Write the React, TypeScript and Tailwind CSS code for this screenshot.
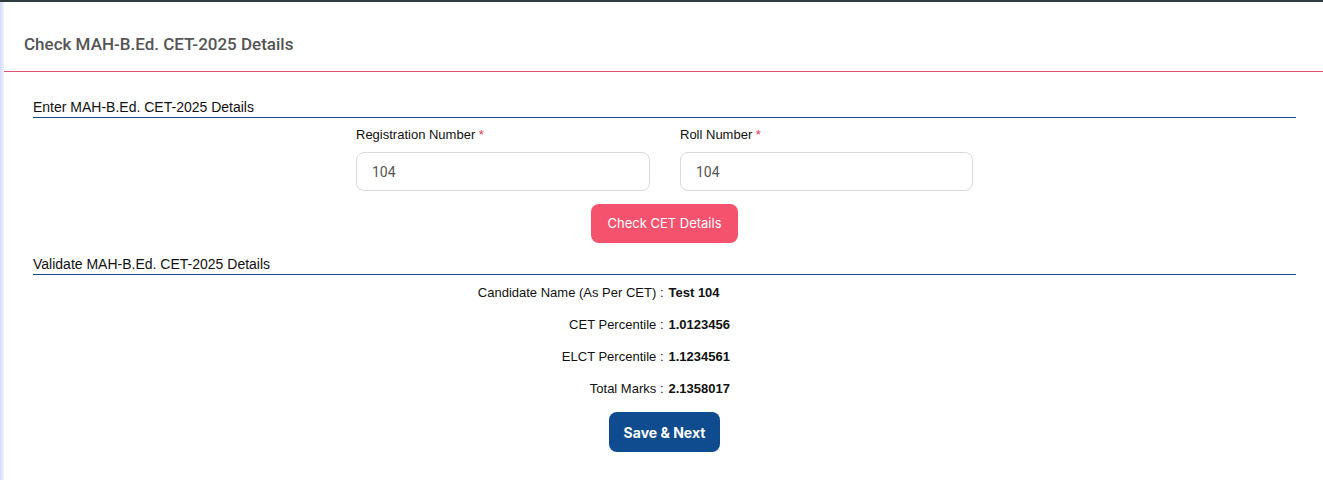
import React from "react";

export default function App() {
  const rows: [string, string][] = [
    ["Candidate Name (As Per CET)", "Test 104"],
    ["CET Percentile", "1.0123456"],
    ["ELCT Percentile", "1.1234561"],
    ["Total Marks", "2.1358017"],
  ];
  return (
    <div className="w-[1323px] h-[480px] bg-white flex flex-col overflow-hidden" style={{ fontFamily: '"Liberation Sans", Arial, sans-serif' }}>
      <div className="h-[2px] bg-[#2c3c40] shrink-0" />
      <div className="flex flex-1">
        <div className="w-[4px] bg-gradient-to-r from-[#d3daf8] to-[#f2f4fe] shrink-0" />
        <div className="flex-1 flex flex-col">
          <div className="h-[70px] flex items-center pl-[20px] border-b border-[#e0566d]">
            <h1 className="text-[17px] font-medium text-[#555555] pt-[16px]" style={{ fontFamily: 'Roboto, "Liberation Sans", sans-serif' }}>
              Check MAH-B.Ed. CET-2025 Details
            </h1>
          </div>
          <div className="pl-[29px] pr-[27px] pt-[27px]">
            <div className="border-b border-[#1b4d8c] text-[14px] text-[#111] leading-[17px] pb-[1px]">
              Enter MAH-B.Ed. CET-2025 Details
            </div>
            <div className="flex justify-center gap-[30px] mt-[8px]">
              <div className="w-[294px] flex flex-col">
                <label className="text-[13px] text-[#111] leading-[17px]">
                  Registration Number <span className="text-[#e0344b]">*</span>
                </label>
                <input
                  readOnly
                  value="104"
                  className="mt-[9px] h-[39px] w-full rounded-[8px] border border-[#d9d9d9] px-[15px] text-[14px] text-[#555] outline-none"
                  style={{ fontFamily: 'Roboto, "Liberation Sans", sans-serif' }}
                />
              </div>
              <div className="w-[293px] flex flex-col">
                <label className="text-[13px] text-[#111] leading-[17px]">
                  Roll Number <span className="text-[#e0344b]">*</span>
                </label>
                <input
                  readOnly
                  value="104"
                  className="mt-[9px] h-[39px] w-full rounded-[8px] border border-[#d9d9d9] px-[15px] text-[14px] text-[#555] outline-none"
                  style={{ fontFamily: 'Roboto, "Liberation Sans", sans-serif' }}
                />
              </div>
            </div>
            <div className="flex justify-center mt-[13px]">
              <button
                className="w-[147px] h-[39px] rounded-[8px] bg-[#f5526e] text-white text-[13px]"
                style={{ fontFamily: 'Inter, "Open Sans", sans-serif' }}
              >
                Check CET Details
              </button>
            </div>
            <div className="mt-[13px] border-b border-[#1b4d8c] text-[14px] text-[#111] leading-[17px] pb-[1px]">
              Validate MAH-B.Ed. CET-2025 Details
            </div>
            <div className="mt-[10px] flex flex-col gap-[16px]">
              {rows.map(([k, v]) => (
                <div key={k} className="grid grid-cols-2 text-[13px] leading-[16px] text-[#111]">
                  <div className="text-right pr-[1px]">{k} :</div>
                  <div className="pl-[4px] font-bold">{v}</div>
                </div>
              ))}
            </div>
            <div className="flex justify-center mt-[15px]">
              <button
                className="w-[111px] h-[40px] rounded-[8px] bg-[#0f4c8f] text-white text-[14px] font-bold"
                style={{ fontFamily: 'Inter, "Open Sans", sans-serif' }}
              >
                Save &amp; Next
              </button>
            </div>
          </div>
        </div>
      </div>
    </div>
  );
}
